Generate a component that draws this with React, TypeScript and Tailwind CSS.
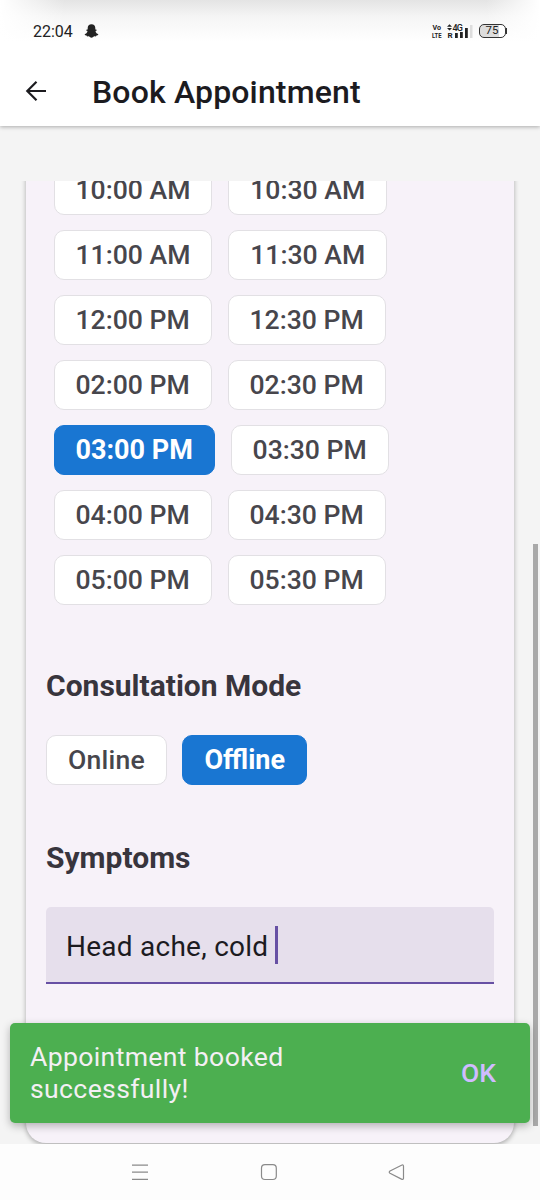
import { clsx } from "clsx";

const SLOTS = [
    ["10:00 AM", "10:30 AM"],
    ["11:00 AM", "11:30 AM"],
    ["12:00 PM", "12:30 PM"],
    ["02:00 PM", "02:30 PM"],
    ["03:00 PM", "03:30 PM"],
    ["04:00 PM", "04:30 PM"],
    ["05:00 PM", "05:30 PM"],
];

export default function App() {
    return (
        <div className="relative flex h-[1200px] w-[540px] flex-col overflow-hidden bg-[#f4f4f4] font-[Roboto,sans-serif]">
            <header className="z-10 h-[126px] shrink-0 bg-white shadow-[0_1px_4px_rgba(0,0,0,0.3)]">
                <StatusBar />
                <div className="flex h-[72px] items-center pl-[24px]">
                    <svg width="24" height="24" viewBox="0 0 24 24" fill="none" stroke="#1c1b1f" strokeWidth="2.2" className="-mt-[3px]">
                        <path d="M22 12H3.500M12.500 2.800 3.300 12l9.200 9.200" />
                    </svg>
                    <h1 className="ml-[44px] text-[32px] leading-10 font-medium tracking-[0.15px] text-[#1c1b1f]">
                        Book Appointment
                    </h1>
                </div>
            </header>

            <main className="mt-[55px] flex h-[963px] shrink-0 flex-col overflow-hidden px-[26px]">
                <section className="-mt-[46px] h-[1008px] shrink-0 rounded-[20px] bg-[#f7f2f9] px-5 pt-[29.600px] shadow-[0_2px_5px_rgba(0,0,0,0.3)]">
                    <div className="flex flex-col gap-[15.100px] pl-[7.500px]">
                        {SLOTS.map((row) => (
                            <div key={row[0]} className="flex gap-[15.700px]">
                                {row.map((slot) => (
                                    <Chip key={slot} label={slot} selected={slot === "03:00 PM"} />
                                ))}
                            </div>
                        ))}
                    </div>

                    <SectionTitle className="mt-[60.500px]">Consultation Mode</SectionTitle>
                    <div className="mt-[29px] flex gap-[15.500px]">
                        <Chip label="Online" className="tracking-[0.2px]" />
                        <Chip label="Offline" selected />
                    </div>

                    <SectionTitle className="mt-[53px]">Symptoms</SectionTitle>
                    <div className="mt-[29px] flex h-[77px] items-center rounded-t-[5px] border-b-2 border-[#6750a4] bg-[#e6dfec] pl-5">
                        <span className="mt-[5px] text-[28px] tracking-[0.25px] text-[#1c1b1f]">Head ache, cold</span>
                        <span className="mt-[2px] ml-[7px] h-[38px] w-[2.500px] bg-[#6750a4]" />
                    </div>
                </section>
            </main>

            <div className="absolute top-[544px] right-[2px] h-[582px] w-[5px] bg-[#a9a9a9]" />

            <div className="absolute top-[1023px] left-[10px] flex h-[100px] w-[520px] items-center justify-between rounded-[5px] bg-[#4caf50] pr-[34px] pl-[20px] shadow-[0_3px_8px_rgba(0,0,0,0.28)]">
                <p className="w-[300px] text-[26.600px] leading-8 tracking-[0.350px] text-[#f4eff4]">
                    Appointment booked successfully!
                </p>
                <button className="text-[26.500px] font-medium text-[#d0bcff]">OK</button>
            </div>

            <NavBar />
        </div>
    );
}

const StatusBar = () => (
    <div className="bg-linear-to-b from-[#e4e4e4] via-[#f5f5f5] via-30% to-white to-75%">
        <div className="flex h-[56px] items-center justify-between bg-[linear-gradient(to_right,#fff,transparent_12%,transparent_90%,#fff)] pt-1.5 pr-[33px] pl-[33px] text-[#222]">
            <div className="flex items-center gap-[11px]">
                <span className="pt-px text-[16px]">22:04</span>
                <svg width="15" height="14" viewBox="0 0 15 14" fill="#222">
                    <path d="M7.500.3c2.400 0 3.800 1.500 3.800 3.700v1.500c.7-.3 1.500 0 1.500.6 0 .5-.8.8-1.300 1.100.3 1.500 1.500 2.500 2.900 3-.2.900-1.200 1.100-2 1.300-.2.400-.1.800-.5.900-.6.100-1.300-.2-2 .1-.7.400-1.300 1.200-2.400 1.200s-1.700-.8-2.400-1.200c-.7-.3-1.400 0-2-.1-.4-.1-.3-.5-.5-.9-.8-.2-1.800-.4-2-1.300 1.400-.5 2.600-1.500 2.900-3-.5-.3-1.300-.6-1.300-1.100 0-.6.8-.9 1.500-.6V4C3.700 1.800 5.100.3 7.500.3z" />
                </svg>
            </div>
            <div className="flex items-center">
                <svg width="10" height="16" viewBox="0 0 10 16" fill="#222" fontWeight="700" className="overflow-visible">
                    <text x="0.500" y="7.300" fontSize="8" textLength="8.500" lengthAdjust="spacingAndGlyphs">Vo</text>
                    <text x="0" y="14.600" fontSize="8" textLength="9.500" lengthAdjust="spacingAndGlyphs">LTE</text>
                </svg>
                <svg width="26" height="16" viewBox="0 0 26 16" fill="#222" className="ml-[5px] overflow-visible">
                    <path d="M0 3.700 2.500 1.200 5 3.700zM0 5h5L2.500 7.500z" />
                    <text x="5.500" y="7.500" fontSize="9" fontWeight="500" textLength="10.500">4G</text>
                    <text x="0.500" y="15" fontSize="8" fontWeight="700">R</text>
                    <path d="M8 10h2.800v5H8zM13 9h2.800v6H13zM18 5h2.800v10H18z" />
                    <path d="M23 2h2.500v13H23z" fill="#ddd" />
                </svg>
                <div className="ml-[6px] flex h-[14px] w-[27px] items-center justify-center rounded-[5px] border border-[#333] bg-linear-to-r from-[#ddd] from-75% to-white to-75% text-[11.500px] leading-none">
                    75
                </div>
                <div className="h-[6px] w-[1.500px] bg-[#333]" />
            </div>
        </div>
    </div>
);

const Chip = ({ label, selected, className }: { label: string; selected?: boolean; className?: string }) => (
    <button
        className={clsx(
            "flex h-[50px] items-center justify-center rounded-[10px] border px-[21px]",
            selected
                ? "border-[#1976d2] bg-[#1976d2] pt-[1.500px] text-[27px] font-bold text-white"
                : "border-[#e2e0e4] bg-white text-[26.600px] font-medium text-[#47464c]",
            className
        )}
    >
        {label}
    </button>
);

const SectionTitle = ({ className, children }: { className?: string; children: string }) => (
    <h2 className={clsx("text-[30px] leading-10 font-bold text-[#38353d]", className)}>{children}</h2>
);

const NavBar = () => (
    <nav className="z-10 h-[56px] shrink-0 bg-[#fdfdfd]">
        <svg width="540" height="56" viewBox="0 0 540 56" fill="none" stroke="#8a8a8a" strokeWidth="1.200">
            <path d="M132 21.200h16M132 28.200h16M132 35.300h16" />
            <rect x="261.500" y="20.700" width="14.800" height="14.800" rx="3.500" />
            <path d="m390 27 11.500-5.800q2-.8 2 1v12q0 1.800-2 .9L390 29.300q-1.500-1.100 0-2.300z" />
        </svg>
    </nav>
);
